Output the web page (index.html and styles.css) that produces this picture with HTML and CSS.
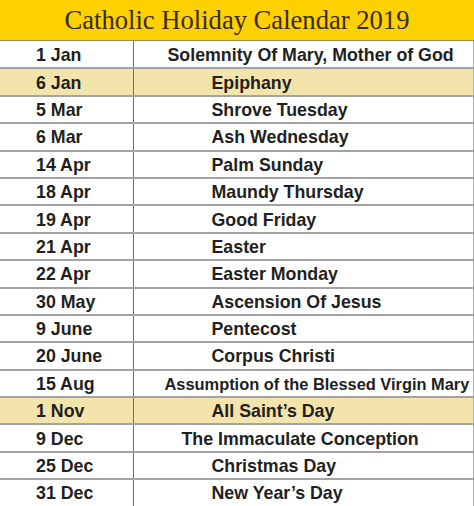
FILE: index.html
```html
<!DOCTYPE html>
<html>
<head>
<meta charset="utf-8">
<link rel="stylesheet" href="styles.css">
</head>
<body>
<div class="sheet">
  <div class="title">Catholic Holiday Calendar 2019</div>
  <table class="cal">
    <tr><td class="date">1 Jan</td><td class="name w1">Solemnity Of Mary, Mother of God</td></tr>
    <tr class="hl"><td class="date">6 Jan</td><td class="name">Epiphany</td></tr>
    <tr><td class="date">5 Mar</td><td class="name">Shrove Tuesday</td></tr>
    <tr><td class="date">6 Mar</td><td class="name">Ash Wednesday</td></tr>
    <tr><td class="date">14 Apr</td><td class="name">Palm Sunday</td></tr>
    <tr><td class="date">18 Apr</td><td class="name">Maundy Thursday</td></tr>
    <tr><td class="date">19 Apr</td><td class="name">Good Friday</td></tr>
    <tr><td class="date">21 Apr</td><td class="name">Easter</td></tr>
    <tr><td class="date">22 Apr</td><td class="name">Easter Monday</td></tr>
    <tr><td class="date">30 May</td><td class="name">Ascension Of Jesus</td></tr>
    <tr><td class="date">9 June</td><td class="name">Pentecost</td></tr>
    <tr><td class="date">20 June</td><td class="name">Corpus Christi</td></tr>
    <tr><td class="date">15 Aug</td><td class="name w2">Assumption of the Blessed Virgin Mary</td></tr>
    <tr class="hl"><td class="date">1 Nov</td><td class="name">All Saint’s Day</td></tr>
    <tr><td class="date">9 Dec</td><td class="name w3">The Immaculate Conception</td></tr>
    <tr><td class="date">25 Dec</td><td class="name">Christmas Day</td></tr>
    <tr><td class="date">31 Dec</td><td class="name">New Year’s Day</td></tr>
  </table>
</div>
</body>
</html>
```

FILE: styles.css
```css
html, body {
  margin: 0;
  padding: 0;
  background: #ffffff;
}
.sheet {
  width: 474px;
  height: 506px;
  overflow: hidden;
}
.title {
  height: 41px;
  background: #fdd000;
  color: #3a2b14;
  font-family: "Liberation Serif", "Times New Roman", serif;
  font-size: 26.6px;
  line-height: 41px;
  text-align: center;
  border-bottom: 1px solid #9a8a50;
  box-sizing: border-box;
}
.cal {
  width: 474px;
  border-collapse: collapse;
  table-layout: fixed;
  font-family: "Liberation Sans", Arial, sans-serif;
  font-weight: bold;
  font-size: 17.8px;
  color: #231f20;
}
.cal tr {
  height: 27.4px;
}
.cal td {
  padding: 0;
  padding-top: 2px;
  border-bottom: 2px solid #a3a3a3;
  white-space: nowrap;
  overflow: hidden;
  vertical-align: middle;
}
.cal .date {
  width: 133px;
  padding-left: 36px;
  box-sizing: border-box;
  border-right: 1px solid #6e6e6e;
}
.cal .name {
  padding-left: 78px;
  border-right: 1px solid #b0b0b0;
}
.cal .name.w1 { padding-left: 34px; }
.cal .name.w2 { padding-left: 31px; font-size: 16.4px; }
.cal .name.w3 { padding-left: 48px; }
.cal tr.hl td {
  background: #f3e4ab;
}
```
